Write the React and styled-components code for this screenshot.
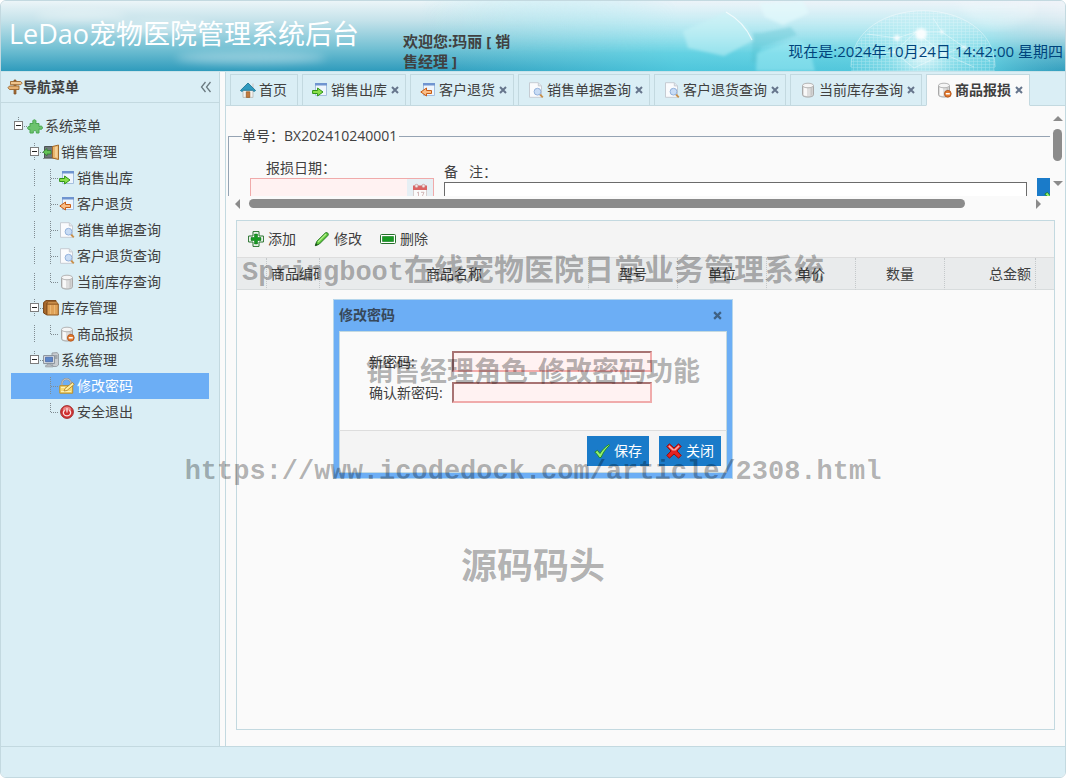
import styled, { createGlobalStyle, css } from "styled-components";

const GlobalStyle = createGlobalStyle`
  * {
    box-sizing: border-box;
  }
  body {
    margin: 0;
    background: #ffffff;
    color: #404040;
    font-family: "Open Sans", "Noto Sans CJK SC", sans-serif;
    font-size: 14px;
    line-height: 20px;
  }
  button, input {
    font: inherit;
    color: inherit;
  }
`;

const Page = styled.div`
  position: relative;
  display: flex;
  flex-direction: column;
  height: 100vh;
  border: 1px solid #c3d9e0;
  border-radius: 6px;
  background: #fafafa;
  overflow: hidden;
`;

const Header = styled.header`
  position: relative;
  display: flex;
  gap: 44px;
  height: 71px;
  padding: 0 2px 0 8px;
  border-bottom: 1px solid #c9e3ea;
  background: linear-gradient(#ecf5f8 0%, #c4e2ea 28%, #72c0d3 68%, #2f9bbc 100%);
`;
const HeaderArt = styled.svg`
  position: absolute;
  inset: 0;
  width: 100%;
  height: 100%;
`;
const Brand = styled.h1`
  position: relative;
  margin: 0;
  padding-top: 13px;
  color: #ffffff;
  font-size: 27px;
  font-weight: 400;
  line-height: 40px;
  white-space: nowrap;
`;
const Welcome = styled.strong`
  position: relative;
  width: 116px;
  padding-top: 30px;
  font-size: 15px;
`;
const Clock = styled.time`
  position: relative;
  margin-left: auto;
  padding-top: 40px;
  color: #00447c;
  font-size: 15px;
  white-space: nowrap;
`;

const Middle = styled.div`
  display: flex;
  flex: 1;
  gap: 5px;
  min-height: 0;
`;

const Sidebar = styled.nav`
  flex: 0 0 219px;
  border-right: 1px solid #c3d9e0;
  background: #daeef5;
`;
const SidebarHead = styled.div`
  display: flex;
  align-items: center;
  height: 31px;
  padding: 0 5px 0 6px;
  border-bottom: 1px solid #c3d9e0;
  font-weight: 700;
`;
const Collapse = styled.button`
  display: flex;
  margin-left: auto;
  padding: 0;
  border: 0;
  background: none;
`;
const Tree = styled.ul`
  margin: 0;
  padding: 10px;
  list-style: none;
`;
const TreeNode = styled.a`
  display: flex;
  align-items: center;
  height: 26px;
  color: inherit;
  text-decoration: none;
  ${({ $selected }) =>
    $selected &&
    css`
      background: #6caef5;
      color: #ffffff;
    `}
`;
const TreeTitle = styled.span`
  padding: 0 2px;
`;

const Main = styled.main`
  display: flex;
  flex: 1;
  flex-direction: column;
  min-width: 0;
  border-left: 1px solid #c3d9e0;
`;
const TabStrip = styled.div`
  display: flex;
  gap: 4px;
  height: 34px;
  padding: 2px 0 0 4px;
  border-bottom: 1px solid #c3d9e0;
  background: #daeef5;
`;
const Tab = styled.div`
  display: flex;
  align-items: center;
  gap: 4px;
  height: 32px;
  padding: 0 ${({ $closable }) => ($closable ? 6 : 10)}px 0 9px;
  border: 1px solid #c3d9e0;
  border-bottom-color: ${({ $active }) => ($active ? "#fafafa" : "#c3d9e0")};
  background: ${({ $active }) => ($active ? "#fafafa" : "#daeef5")};
  font-weight: ${({ $active }) => ($active ? 700 : 400)};
`;
const TabLabel = styled.button`
  display: flex;
  align-items: center;
  gap: 3px;
  padding: 0;
  border: 0;
  background: none;
  white-space: nowrap;
`;
const IconButton = styled.button`
  display: flex;
  padding: 0;
  border: 0;
  background: none;
`;

const FormArea = styled.section`
  display: grid;
  grid-template-columns: 1fr 15px;
  grid-template-rows: 90px 15px;
  flex: none;
`;
const FormView = styled.div`
  padding: 20px 0 0 2px;
  min-width: 0;
  overflow: hidden;
`;
const Fieldset = styled.fieldset`
  display: block;
  width: 1000px;
  height: 110px;
  margin: 0;
  padding: 0 21px;
  border: 1px solid #95a3b3;
`;
const Legend = styled.legend`
  margin-left: -8px;
  padding: 0 2px 0 0;
`;
const FieldRow = styled.div`
  display: flex;
  align-items: flex-start;
  gap: 10px;
  padding-top: 12px;
`;
const Field = styled.div`
  display: flex;
  flex-direction: column;
  padding-top: ${({ $drop }) => $drop || 0}px;
`;
const FieldLabel = styled.label`
  padding-left: ${({ $indent }) => $indent || 0}px;
`;
const DateBox = styled.div`
  display: flex;
  width: 184px;
  height: 24px;
  border: 1px solid #f0aaaa;
  background: #fff2f2;
`;
const DateInput = styled.input`
  flex: 1;
  min-width: 0;
  border: 0;
  background: none;
`;
const DateButton = styled.button`
  width: 26px;
  padding: 4px 0 0;
  border: 0;
  background: #e6eff4;
`;
const RemarkInput = styled.input`
  width: 583px;
  height: 22px;
  border: 1px solid #6b6b6b;
  background: #ffffff;
`;
const BlueButton = styled.button`
  display: flex;
  align-items: center;
  gap: 4px;
  height: 30px;
  padding: 0 7px;
  border: 0;
  background: #1a7bc9;
  color: #ffffff;
  white-space: nowrap;
`;
const ClippedAction = styled.div`
  padding-top: 20px;
`;

const VerticalBar = styled.div`
  display: flex;
  flex-direction: column;
  align-items: center;
  gap: 8px;
  padding: 10px 0;
`;
const VerticalThumb = styled.div`
  width: 9px;
  height: 32px;
  margin-bottom: auto;
  border-radius: 5px;
  background: #8b8b8b;
`;
const HorizontalBar = styled.div`
  display: flex;
  align-items: center;
  gap: 9px;
  padding: 0 9px;
`;
const HorizontalTrack = styled.div`
  flex: 1;
`;
const HorizontalThumb = styled.div`
  width: 92%;
  height: 9px;
  border-radius: 5px;
  background: #8b8b8b;
`;

const GridPanel = styled.section`
  flex: 1;
  margin: 9px 10px 16px;
  border: 1px solid #c3d9e0;
`;
const Toolbar = styled.div`
  display: flex;
  gap: 18px;
  height: 37px;
  padding: 0 11px;
  border-bottom: 1px solid #dddddd;
  background: #f4f4f4;
`;
const ToolButton = styled.button`
  display: flex;
  align-items: center;
  gap: 4px;
  padding: 0;
  border: 0;
  background: none;
`;
const GoodsTable = styled.table`
  width: 100%;
  table-layout: fixed;
  border-collapse: separate;
  border-spacing: 0;
  background: #e9ebec;
`;
const Th = styled.th`
  height: 32px;
  padding: 0 4px;
  border-right: ${({ $last }) => ($last ? 0 : "1px dotted #c4c8ca")};
  border-bottom: 1px solid #d8dcdd;
  font-weight: 400;
  text-align: ${({ $align }) => $align || "center"};
  white-space: nowrap;
  overflow: hidden;
`;

const Footer = styled.footer`
  flex: none;
  height: 31px;
  border-top: 1px solid #c3d9e0;
  background: #daeef5;
`;

const Overlay = styled.div`
  position: absolute;
  inset: 0;
  display: grid;
  place-items: center;
`;
const Dialog = styled.form`
  width: 400px;
  padding: 5px;
  border: 1px solid #b5d6ec;
  background: #6caef5;
`;
const DialogHead = styled.div`
  display: flex;
  align-items: center;
  justify-content: space-between;
  height: 26px;
  padding: 0 5px 6px 0;
  color: #37485a;
  font-weight: 700;
`;
const DialogBody = styled.div`
  display: flex;
  flex-direction: column;
  gap: 10px;
  height: 100px;
  padding: 19px 29px 0;
  border: 1px solid #c3d9e0;
  border-bottom: 1px solid #dddddd;
  background: #fafafa;
`;
const DialogRow = styled.div`
  display: flex;
  align-items: center;
  height: 21px;
`;
const DialogLabel = styled.label`
  width: 83px;
`;
const PasswordInput = styled.input`
  width: 200px;
  height: 21px;
  border: 2px solid #f0abab;
  border-top-color: #a87373;
  border-left-color: #a87373;
  background: #fff2f2;
`;
const DialogFoot = styled.div`
  display: flex;
  justify-content: flex-end;
  gap: 10px;
  padding: 5px 5px 6px;
  border: 1px solid #c3d9e0;
  border-top: 0;
  background: #f4f4f4;
`;

const Watermark = styled.div`
  position: absolute;
  inset: 219px 0 auto;
  display: grid;
  grid-template-rows: 100px 100px 100px 86px;
  place-items: center;
  color: rgba(0, 0, 0, 0.3);
  font-weight: 700;
  pointer-events: none;
`;
const Mark = styled.div`
  font-family: "Noto Sans CJK SC", sans-serif;
  font-size: ${({ $size }) => $size}px;
  white-space: nowrap;
`;
const MarkLatin = styled.span`
  font-family: "Liberation Mono", monospace;
  font-size: 27px;
`;

const shapes = {
  sign: (
    <>
      <path d="M7 1h2v14H7z" fill="#a8713a" stroke="#7b4a1d" strokeWidth=".7" />
      <path d="M3.5 2.5h10.200l1.500 1.600-1.500 1.600H3.500z" fill="#f0c48c" stroke="#9a6630" strokeWidth=".9" />
      <path d="M2.500 7h9.500v3.500H2.500L1 8.700z" fill="#e8b273" stroke="#9a6630" strokeWidth=".9" />
    </>
  ),
  puzzle: (
    <path
      d="M3 5.500h3.200C5.200 3.200 5.900 1.800 7.400 1.800S9.600 3.200 8.600 5.500H12v3c2-.9 3.500-.3 3.500 1.200s-1.500 2.200-3.500 1.200V15H9.300c.4-1.700-.3-2.400-1.500-2.400s-1.900.7-1.500 2.400H3v-3.600c-1.600.4-2.400-.3-2.400-1.400S1.400 8.200 3 8.600z"
      fill="#6cc36e"
      stroke="#4aa651"
    />
  ),
  door: (
    <>
      <path d="M1.500 2.500h9V14h-9z" fill="#70777a" stroke="#4d5456" />
      <path d="M0 14.500h15" stroke="#8a8f91" />
      <path d="M9.500 2.500l6-1.500v14.500l-6-1.500z" fill="#e8b56d" stroke="#a56b2b" />
      <path d="M12 3l2.500-.6V14L12 13z" fill="#f5d094" />
      <path d="M0 8l4-3.500v2h4v3.500H4v2z" fill="#63c257" stroke="#2b7a2b" strokeWidth=".7" />
    </>
  ),
  out: (
    <>
      <path d="M3.500 1.500h11v12h-11z" fill="#eef5fd" stroke="#a5bfdf" />
      <path d="M3 1h12v2.500H3z" fill="#6f94d0" />
      <path d="M.6 8.500h5V6l5.400 4-5.400 4v-2.500h-5z" fill="#8ae04a" stroke="#2f9418" />
    </>
  ),
  back: (
    <>
      <path d="M3.500 1.500h11v12h-11z" fill="#eef5fd" stroke="#a5bfdf" />
      <path d="M3 1h12v2.500H3z" fill="#6f94d0" />
      <path d="M11.500 8.500h-5V6L.8 10l5.700 4v-2.500h5z" fill="#fbbd85" stroke="#c95d16" />
    </>
  ),
  search: (
    <>
      <path d="M1.500.7h8.800l3.200 3.200v11.400h-12z" fill="#fafbfd" stroke="#c6ccd3" />
      <path d="M10.300.7v3.200h3.200" fill="#e3e8ed" stroke="#c6ccd3" />
      <path d="M12 12.500l2.800 2.800" stroke="#c7904c" strokeWidth="1.800" />
      <circle cx="9.500" cy="9.700" r="3.400" fill="#c8dcf5" stroke="#93b2dc" />
    </>
  ),
  db: (
    <>
      <path d="M2.500 3.500v9.300c0 3 11 3 11 0V3.500z" fill="#dedede" stroke="#a8a8a8" />
      <path d="M4 5v8.300c1 .5 2 .7 3 .8V5z" fill="#f8f8f8" />
      <path d="M10.500 5v9l2-.7V5z" fill="#c6c6c6" />
      <ellipse cx="8" cy="3.500" rx="5.500" ry="2.300" fill="#f5f5f5" stroke="#b4b4b4" />
    </>
  ),
  box: (
    <>
      <path d="M.6 2.500L3 .6h10l-1 2.400H4v12l-3.400-2z" fill="#a8692c" stroke="#754315" />
      <path d="M4 4h11.300v11H4z" fill="#dfa258" stroke="#8d5721" />
      <path d="M4 4l1-2.500h8.500L15 4z" fill="#c98e4b" stroke="#8d5721" strokeWidth=".7" />
      <path d="M7.500 5v9M11.500 5v9" stroke="#f0c283" strokeWidth=".7" />
    </>
  ),
  pc: (
    <>
      <path d="M9 1l5-.4 1.500 1.400v11l-2 1.500H9z" fill="#c8ccd0" stroke="#8c9297" strokeWidth=".8" />
      <path d="M11.500 4h3M11.500 6h3" stroke="#7b8388" />
      <path d="M.6 3.600h10.800v8H.6z" fill="#dfe2e6" stroke="#878f98" />
      <path d="M2.500 5.200h7v4.600h-7z" fill="#5c86c8" stroke="#3f62a0" strokeWidth=".7" />
      <path d="M4 12h4v1.500h2V15H2.500v-1.500H4z" fill="#b7bcc2" stroke="#8a9097" strokeWidth=".5" />
    </>
  ),
  lock: (
    <>
      <path d="M3 8V5.500c0-6 9-6 9 0V8" stroke="#8d9499" strokeWidth="2" />
      <path d="M3 8V5.500c0-6 9-6 9 0V8" stroke="#d6dadd" strokeWidth=".7" />
      <path d="M.8 7.700h12.900v7.500H.8z" fill="#f7d972" stroke="#ba8d27" />
      <path d="M2 9.500h4M2 13.500h10" stroke="#fdf1b5" />
      <path d="M5 13l1-2.500 7.500-6 1.700 1.900L8 12.500z" fill="#fff0a0" stroke="#ad7a20" strokeWidth=".8" />
    </>
  ),
  power: (
    <>
      <circle cx="8" cy="8" r="6.400" fill="#cf3030" stroke="#a33434" />
      <path d="M3.500 5.500c1.500-4 7.500-4 9 0-3 1.500-6 1.500-9 0z" fill="#eb8383" />
      <path d="M5.600 6c-3 3.500 0 5.800 2.400 5.800s5.400-2.300 2.400-5.800M8 4v4.500" stroke="#fbe3e3" strokeWidth="1.200" />
    </>
  ),
  home: (
    <>
      <path d="M3 8h10v7.400H3z" fill="#f1f1ee" stroke="#b6b6b0" strokeWidth=".8" />
      <path d="M12 1.500h2V6h-2z" fill="#d5d8da" />
      <path d="M8 1L.4 8.500l1.600 1 1.500-1.200h9L14 9.500l1.600-1z" fill="#2f9abf" stroke="#17708f" strokeWidth=".8" />
      <path d="M6.300 9.800h3.500v5.600H6.300z" fill="#c3793c" stroke="#94561f" strokeWidth=".7" />
    </>
  ),
  add: (
    <>
      <path d="M5 .6h6V5h4.400v6H11v4.400H5V11H.6V5H5z" fill="#fff" stroke="#25702a" strokeLinejoin="round" />
      <path d="M6.500 3h3v3.500H13v3H9.500V13h-3V9.500H3v-3h3.500z" fill="#179a22" stroke="#0c7517" strokeWidth=".6" />
    </>
  ),
  edit: (
    <>
      <path d="M1.300 14.700l1.400-4.200L11.300 2c1.600-1.400 3.900.8 2.600 2.500l-8.600 8.600z" fill="#60c93b" stroke="#247524" />
      <path d="M4 11l8-8" stroke="#b5ef8d" strokeWidth="1.300" />
      <path d="M1 15l1-3 2 2z" fill="#1f4f1c" />
    </>
  ),
  remove: (
    <>
      <rect x=".5" y="3.500" width="15" height="9" rx="1" fill="#fff" stroke="#25702a" />
      <path d="M2.500 5.500h11v5h-11z" fill="#179a22" stroke="#0c7517" strokeWidth=".6" />
    </>
  ),
  ok: (
    <path
      d="M.8 9l2.600-1.600L6 10.500C8 7 11 4 15 1.500l.5 1C11.500 6 9 10 7 14.500H5.300C4 12.300 2.500 10.500.8 9z"
      fill="#95f06c"
      stroke="#1d8325"
      strokeWidth=".9"
    />
  ),
  cancel: (
    <>
      <path
        d="M3.400.8L8 5 12.600.8l2.600 2.700L11 8l4.200 4.400-2.600 2.800L8 11l-4.600 4.200-2.600-2.800L5 8 .8 3.500z"
        fill="#e32323"
        stroke="#8f1010"
      />
      <path d="M3.400 2.300L8 6.500l4.600-4.200 1 1.200L9.500 7.500h-3L2.300 3.500z" fill="#f7aaa6" />
    </>
  ),
  calendar: (
    <>
      <path d="M1.500 3.500h13v12h-13z" fill="#fbfbfb" stroke="#d8cfcf" />
      <path d="M1 2.500h14V7H1z" fill="#dc6464" />
      <circle cx="4.500" cy="3" r="1.700" fill="#f2e4e4" stroke="#bd7c7c" strokeWidth=".6" />
      <circle cx="11.500" cy="3" r="1.700" fill="#f2e4e4" stroke="#bd7c7c" strokeWidth=".6" />
      <path d="M5 10l1.500-1v5M9 9.300h3l-2 4.700" stroke="#d3b9b9" />
    </>
  ),
  collapse: <path d="M7.500 3L3.500 8l4 5M12.500 3l-4 5 4 5" stroke="#6b7a80" strokeWidth="1.300" />,
};
shapes.dbMinus = (
  <>
    {shapes.db}
    <circle cx="11.800" cy="11.800" r="3.400" fill="#e37a2e" stroke="#aa4a13" strokeWidth=".8" />
    <path d="M9.800 11.800h4" stroke="#fff" strokeWidth="1.500" />
  </>
);

const Icon = ({ name }) => (
  <svg width="16" height="16" viewBox="0 0 16 16" fill="none" aria-hidden="true">
    {shapes[name]}
  </svg>
);

const Cross = ({ size, color }) => (
  <svg width={size} height={size} viewBox="0 0 8 8" aria-hidden="true">
    <path d="M1 1l6 6M7 1L1 7" stroke={color} strokeWidth="2" />
  </svg>
);

const Arrow = ({ points, width, height }) => (
  <svg width={width} height={height} aria-hidden="true">
    <polygon points={points} fill="#8b8b8b" />
  </svg>
);

// one 16x18 cell of the tree's dotted guide lines
const guides = {
  line: "M7.5 0V18",
  join: "M7.5 0V18M8 9.500H16",
  end: "M7.5 0V9M8 9.500H16",
  open: "M7.5 0V4M7.5 14V18M13 9.500H16",
  openLast: "M7.5 0V4M13 9.500H16",
  blank: "",
};
const Guide = ({ type }) => (
  <svg width="16" height="18" viewBox="0 0 16 18" fill="none" aria-hidden="true">
    <path d={guides[type]} stroke="#808c92" strokeDasharray="1 1" shapeRendering="crispEdges" />
    {type.startsWith("open") && (
      <>
        <rect x="3.5" y="4.500" width="8" height="8" fill="#fff" stroke="#7d7d7d" />
        <path d="M5 8.500h5" stroke="#222" />
      </>
    )}
  </svg>
);

const menu = [
  { text: "系统菜单", icon: "puzzle", lines: ["openLast"] },
  { text: "销售管理", icon: "door", lines: ["blank", "open"] },
  { text: "销售出库", icon: "out", lines: ["blank", "line", "join"] },
  { text: "客户退货", icon: "back", lines: ["blank", "line", "join"] },
  { text: "销售单据查询", icon: "search", lines: ["blank", "line", "join"] },
  { text: "客户退货查询", icon: "search", lines: ["blank", "line", "join"] },
  { text: "当前库存查询", icon: "db", lines: ["blank", "line", "end"] },
  { text: "库存管理", icon: "box", lines: ["blank", "open"] },
  { text: "商品报损", icon: "dbMinus", lines: ["blank", "line", "end"] },
  { text: "系统管理", icon: "pc", lines: ["blank", "openLast"] },
  { text: "修改密码", icon: "lock", lines: ["blank", "blank", "join"], selected: true },
  { text: "安全退出", icon: "power", lines: ["blank", "blank", "end"] },
];

const tabs = [
  { text: "首页", icon: "home" },
  { text: "销售出库", icon: "out", closable: true },
  { text: "客户退货", icon: "back", closable: true },
  { text: "销售单据查询", icon: "search", closable: true },
  { text: "客户退货查询", icon: "search", closable: true },
  { text: "当前库存查询", icon: "db", closable: true },
  { text: "商品报损", icon: "dbMinus", closable: true, active: true },
];

const columns = [
  { text: "", width: 30 },
  { text: "商品编码", width: 53, align: "left" },
  { text: "商品名称" },
  { text: "型号", width: 89 },
  { text: "单位", width: 89 },
  { text: "单价", width: 89 },
  { text: "数量", width: 89 },
  { text: "总金额", width: 91, align: "right" },
  { text: "", width: 18 },
];

const HeaderBackground = () => (
  <HeaderArt viewBox="0 0 1064 70" preserveAspectRatio="xMaxYMid slice" aria-hidden="true">
    <defs>
      <linearGradient id="cyanFade" x1="0" x2="1" y1="0" y2="0">
        <stop offset="0" stopColor="#62e2f0" stopOpacity="0" />
        <stop offset=".4" stopColor="#62e2f0" stopOpacity=".6" />
        <stop offset=".88" stopColor="#70e4f0" stopOpacity=".6" />
        <stop offset="1" stopColor="#5fc0d4" stopOpacity=".1" />
      </linearGradient>
      <linearGradient id="topLight" x1="0" x2="0" y1="0" y2="1">
        <stop offset="0" stopColor="#f0f3f8" stopOpacity=".95" />
        <stop offset=".75" stopColor="#f0f3f8" stopOpacity="0" />
      </linearGradient>
      <linearGradient id="fadeIn" x1="0" x2="1" y1="0" y2="0">
        <stop offset="0" stopColor="#fff" stopOpacity="0" />
        <stop offset=".4" stopColor="#fff" />
      </linearGradient>
      <mask id="rightSide">
        <rect x="420" width="644" height="70" fill="url(#fadeIn)" />
      </mask>
      <radialGradient id="globeLight" cx=".5" cy=".4" r=".6">
        <stop offset="0" stopColor="#fff" stopOpacity=".85" />
        <stop offset=".4" stopColor="#c4f4f8" stopOpacity=".4" />
        <stop offset="1" stopColor="#8be0ec" stopOpacity=".1" />
      </radialGradient>
      <pattern id="mesh" width="4" height="3" patternUnits="userSpaceOnUse">
        <path d="M0 .5h4M.5 0v3" stroke="#fff" strokeWidth=".5" opacity=".35" />
      </pattern>
      <filter id="soft">
        <feGaussianBlur stdDeviation="4" />
      </filter>
      <filter id="hazy">
        <feGaussianBlur stdDeviation="1.500" />
      </filter>
    </defs>
    <rect x="420" width="644" height="70" fill="url(#cyanFade)" />
    <rect x="420" width="644" height="70" fill="url(#topLight)" mask="url(#rightSide)" />
    <g fill="#fff" opacity=".35" filter="url(#soft)">
      <ellipse cx="80" cy="15" rx="45" ry="5" />
      <ellipse cx="160" cy="26" rx="50" ry="7" />
      <ellipse cx="250" cy="57" rx="75" ry="6" />
    </g>
    <g filter="url(#hazy)">
      <path d="M682 30l43-19 20 14 8 14-30 16-36-8z" fill="#c9f4f8" opacity=".5" />
      <path d="M752 32l-2 30h6l4-16 36-12-6-8-30 6z" fill="#4fb9c9" opacity=".3" />
      <path d="M755 70l1-18 40-14 12 8 6 24z" fill="#a4eef5" opacity=".5" />
      <path d="M758 2l44-2 6 12-26 12-18-8z" fill="#e2fafc" opacity=".7" />
    </g>
    <path d="M725 11q18 10 26 28" fill="none" stroke="#fff" strokeWidth="1.200" opacity=".7" />
    <ellipse cx="922" cy="66" rx="72" ry="56" fill="url(#globeLight)" />
    <ellipse cx="922" cy="66" rx="72" ry="56" fill="url(#mesh)" />
    <g fill="none" stroke="#fff" strokeWidth=".8" opacity=".5">
      <path d="M850 66c0-75 144-75 144 0" />
      <path d="M866 33l30 4 19-6 26 0 22 15 26 14M915 31l-22 20-26 2M915 31l28 22 20-7M893 51l20 16 30-14 30 13M941 31l-9-14" />
    </g>
    <g fill="#fff" opacity=".9" filter="url(#hazy)">
      <circle cx="920" cy="33" r="6" />
      <circle cx="941" cy="31" r="2" />
      <circle cx="896" cy="37" r="3" />
      <circle cx="943" cy="53" r="2" />
      <circle cx="963" cy="46" r="2" />
      <circle cx="893" cy="51" r="2" />
    </g>
    <path d="M955 0h80v14q-45 25-65 4z" fill="#fff" opacity=".2" filter="url(#soft)" />
  </HeaderArt>
);

const App = () => {
  return (
    <Page>
      <GlobalStyle />
      <Header>
        <HeaderBackground />
        <Brand>LeDao宠物医院管理系统后台</Brand>
        <Welcome>欢迎您:玛丽 [ 销售经理 ]</Welcome>
        <Clock>现在是:2024年10月24日 14:42:00 星期四</Clock>
      </Header>

      <Middle>
        <Sidebar>
          <SidebarHead>
            <Icon name="sign" />
            导航菜单
            <Collapse type="button" aria-label="collapse">
              <Icon name="collapse" />
            </Collapse>
          </SidebarHead>
          <Tree>
            {menu.map((item) => (
              <li key={item.text}>
                <TreeNode href="#" $selected={item.selected}>
                  {item.lines.map((type, i) => (
                    <Guide key={i} type={type} />
                  ))}
                  <Icon name={item.icon} />
                  <TreeTitle>{item.text}</TreeTitle>
                </TreeNode>
              </li>
            ))}
          </Tree>
        </Sidebar>

        <Main>
          <TabStrip>
            {tabs.map((tab) => (
              <Tab key={tab.text} $active={tab.active} $closable={tab.closable}>
                <TabLabel type="button">
                  <Icon name={tab.icon} />
                  {tab.text}
                </TabLabel>
                {tab.closable && (
                  <IconButton type="button" aria-label="close">
                    <Cross size={8} color="#66758c" />
                  </IconButton>
                )}
              </Tab>
            ))}
          </TabStrip>

          <FormArea>
            <FormView>
              <Fieldset>
                <Legend>单号：BX202410240001</Legend>
                <FieldRow>
                  <Field>
                    <FieldLabel htmlFor="lossDate" $indent={16}>
                      报损日期：
                    </FieldLabel>
                    <DateBox>
                      <DateInput id="lossDate" type="text" />
                      <DateButton type="button" aria-label="calendar">
                        <Icon name="calendar" />
                      </DateButton>
                    </DateBox>
                  </Field>
                  <Field $drop={4}>
                    <FieldLabel htmlFor="remark">备&nbsp;&nbsp;&nbsp;注：</FieldLabel>
                    <RemarkInput id="remark" type="text" />
                  </Field>
                  <ClippedAction>
                    <BlueButton type="button" aria-label="save">
                      <Icon name="ok" />
                    </BlueButton>
                  </ClippedAction>
                </FieldRow>
              </Fieldset>
            </FormView>
            <VerticalBar>
              <Arrow points="0,5 5,0 10,5" width={10} height={5} />
              <VerticalThumb />
              <Arrow points="0,0 5,5 10,0" width={10} height={5} />
            </VerticalBar>
            <HorizontalBar>
              <Arrow points="5,0 0,5 5,10" width={5} height={10} />
              <HorizontalTrack>
                <HorizontalThumb />
              </HorizontalTrack>
              <Arrow points="0,0 5,5 0,10" width={5} height={10} />
            </HorizontalBar>
          </FormArea>

          <GridPanel>
            <Toolbar>
              <ToolButton type="button">
                <Icon name="add" />
                添加
              </ToolButton>
              <ToolButton type="button">
                <Icon name="edit" />
                修改
              </ToolButton>
              <ToolButton type="button">
                <Icon name="remove" />
                删除
              </ToolButton>
            </Toolbar>
            <GoodsTable>
              <colgroup>
                {columns.map((col, i) => (
                  <col key={i} width={col.width} />
                ))}
              </colgroup>
              <thead>
                <tr>
                  {columns.map((col, i) => (
                    <Th key={i} $align={col.align} $last={i === columns.length - 1}>
                      {col.text}
                    </Th>
                  ))}
                </tr>
              </thead>
            </GoodsTable>
          </GridPanel>
        </Main>
      </Middle>
      <Footer />

      <Overlay>
        <Dialog>
          <DialogHead>
            修改密码
            <IconButton type="button" aria-label="close dialog">
              <Cross size={9} color="#3f6285" />
            </IconButton>
          </DialogHead>
          <DialogBody>
            <DialogRow>
              <DialogLabel htmlFor="password">新密码:</DialogLabel>
              <PasswordInput id="password" type="password" />
            </DialogRow>
            <DialogRow>
              <DialogLabel htmlFor="password2">确认新密码:</DialogLabel>
              <PasswordInput id="password2" type="password" />
            </DialogRow>
          </DialogBody>
          <DialogFoot>
            <BlueButton type="button">
              <Icon name="ok" />
              保存
            </BlueButton>
            <BlueButton type="button">
              <Icon name="cancel" />
              关闭
            </BlueButton>
          </DialogFoot>
        </Dialog>
      </Overlay>

      <Watermark>
        <Mark $size={30}>
          <MarkLatin>Springboot</MarkLatin>在线宠物医院日常业务管理系统
        </Mark>
        <Mark $size={27}>销售经理角色-修改密码功能</Mark>
        <Mark $size={27}>
          <MarkLatin>https://www.icodedock.com/article/2308.html</MarkLatin>
        </Mark>
        <Mark $size={36}>源码码头</Mark>
      </Watermark>
    </Page>
  );
};

export default App;
